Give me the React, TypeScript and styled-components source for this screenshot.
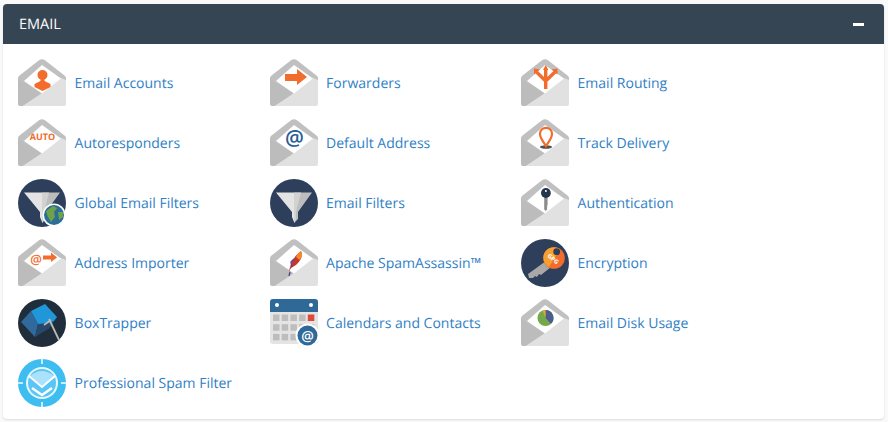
import React from "react";
import styled, { createGlobalStyle } from "styled-components";

const Global = createGlobalStyle`
  html, body { margin: 0; padding: 0; background: #f9f9f9; }
  body { font-family: "Open Sans", "Liberation Sans", sans-serif; text-rendering: geometricPrecision; }
`;

const Page = styled.div`
  width: 888px;
  height: 422px;
  box-sizing: border-box;
  padding: 4px 4px 3px 3px;
  overflow: hidden;
`;

const Panel = styled.section`
  height: 100%;
  background: #fff;
  border-radius: 4px;
  box-shadow: 0 1px 2px rgba(0, 0, 0, 0.12);
  overflow: hidden;
`;

const Header = styled.header`
  height: 40px;
  box-sizing: border-box;
  display: flex;
  align-items: center;
  justify-content: space-between;
  padding: 0 20px 0 16px;
  background: #364554;
  color: #fff;
  font-size: 14.5px;
`;

const Minus = styled.span`
  width: 11px;
  height: 3px;
  background: #fff;
`;

const Grid = styled.div`
  display: grid;
  grid-template-columns: 251.5px 251.5px 251.5px;
  grid-auto-rows: 60px;
  padding: 15px 15px 0;
`;

const Item = styled.a`
  display: flex;
  align-items: center;
  gap: 8.6px;
  color: #2f80c6;
  font-size: 14px;
  text-decoration: none;
  height: 48px;
`;

const Icon = styled.svg`
  width: 48px;
  height: 48px;
  flex: none;
`;

const IconText = styled.text`
  font-family: "Open Sans", "Liberation Sans", sans-serif;
  text-anchor: middle;
`;

const Env: React.FC<{ children?: React.ReactNode }> = ({ children }) => (
  <Icon viewBox="0 0 48 48">
    <path d="M0 19 Q0 17.5 1.5 16.4 L21 1.2 Q24 -0.6 27 1.2 L46.5 16.4 Q48 17.5 48 19 L48 26 L24 36 L0 26 Z" fill="#c0c0c0" />
    <path d="M0 20 L24 35 L5 47 L2 47 Q0 47 0 45 Z" fill="#bcbcbc" />
    <path d="M48 21 L48 45 Q48 47 46 47 L5 47 L24 34 L43 19 Z" fill="#e1e1e1" />
    <path d="M6 22 L24 6 L43 19.5 L24 34.5 Z" fill="#fff" />
    {children}
  </Icon>
);

const O = "#f26c2b";

const Funnel: React.FC<{ children?: React.ReactNode }> = ({ children }) => (
  <Icon viewBox="0 0 48 48">
    <circle cx="24" cy="24" r="24" fill="#2e3f5c" />
    <path d="M6 13.5 L24 13.5 L24 43 L22 38 L22 33 Z" fill="#e4e4e4" />
    <path d="M24 13.5 L42 13.5 L28 33 L28 40 L24 44 Z" fill="#bdbdbd" />
    <path d="M24 13.5 L31 13.5 L26 33 L26 41 L24 44 Z" fill="#d2d2d2" />
    {children}
  </Icon>
);

const items: [string, React.ReactNode][] = [
  ["Email Accounts", <Env key="a"><circle cx="24.5" cy="16" r="5" fill={O} /><path d="M22.5 19 L26.5 19 L26.5 22 L32.5 25 L32.5 28 L24.5 32 L16.5 28 L16.5 25 L22.5 22 Z" fill={O} /></Env>],
  ["Forwarders", <Env key="b"><path d="M15 15 L27 15 L27 10 L37 18 L27 26 L27 22 L15 22 Z" fill={O} /></Env>],
  ["Email Routing", <Env key="c"><path d="M24.7 30 L24.7 10 M24.7 22 L15.5 13 M24.7 22 L34 13" fill="none" stroke={O} strokeWidth="3.4" /><path d="M22 11 L24.7 6 L27.4 11 Z M13 15.5 L13 9.5 L19 10.5 Z M36.5 15.5 L36.5 9.5 L30.5 10.5 Z" fill={O} /></Env>],
  ["Autoresponders", <Env key="d"><IconText x="24.5" y="21" fill={O} fontSize="9" fontWeight="700">AUTO</IconText></Env>],
  ["Default Address", <Env key="e"><IconText x="24.5" y="26" fill="#275d92" fontSize="21" fontWeight="600">@</IconText></Env>],
  ["Track Delivery", <Env key="f"><ellipse cx="25" cy="28" rx="6" ry="1.8" fill="#55524d" /><path d="M25 27 C22 22 19 19.5 19 14.8 A6 6 0 0 1 31 14.8 C31 19.5 28 22 25 27 Z" fill="none" stroke={O} strokeWidth="2.2" /></Env>],
  ["Global Email Filters", <Funnel key="g"><circle cx="36" cy="36" r="11.5" fill="#fff" /><circle cx="36" cy="36" r="10" fill="#2b6f97" /><path d="M28 32 L35 27 L39 29 L36 33 L37 38 L33 43 L30 38 Z M40 33 L45 33 L45 38 L41 41 Z" fill="#6fa04a" /></Funnel>],
  ["Email Filters", <Funnel key="h" />],
  ["Authentication", <Env key="i"><path d="M23.2 18 L26.6 18 L26.6 26 L25.8 27 L26.6 28 L25.6 29 L26.4 30 L24.9 32 L23.2 30.5 Z" fill="#8c8c8c" /><circle cx="24.9" cy="14" r="4.9" fill="#22354a" /><circle cx="24.9" cy="12" r="1" fill="#fff" /></Env>],
  ["Address Importer", <Env key="j"><IconText x="18" y="25" fill={O} fontSize="13" fontWeight="600">@</IconText><path d="M25 16.5 L33 16.5 L33 13.5 L39 18.5 L33 23 L33 20.5 L25 20.5 Z" fill={O} /></Env>],
  ["Apache SpamAssassin™", <Env key="k"><path d="M19 33 C20 26 23 18 31 12 C33 17 31 22 26 26 L21 29 Z" fill="#c0392b" /><path d="M31 12 C33 15 32 18 29.5 21 L26 18 C27 15.5 29 13.5 31 12 Z" fill="#f08a2c" /><path d="M20 33 L19 37" stroke="#5b4a8a" strokeWidth="1.4" /><path d="M22 28 L21 23 L24 20" stroke="#6a3f8f" strokeWidth="1.4" fill="none" /></Env>],
  ["Encryption", <Icon key="l" viewBox="0 0 48 48"><circle cx="24" cy="24" r="24" fill="#2e3f5c" /><path d="M25 22 L7 35 L8 39 L12 39 L14 37 L16 38 L18 35 L20 36 L30 28 Z" fill="#a8a8a8" /><circle cx="33" cy="19" r="10.8" fill={O} /><path d="M24 13 A10.8 10.8 0 0 1 39 10 L28 28 A10.8 10.8 0 0 1 24 13 Z" fill="#f7a032" /><circle cx="35.7" cy="12.7" r="3.4" fill="#2e3f5c" /><IconText x="32" y="22" fill="#fff" fontSize="6" fontWeight="700" transform="rotate(40 32 20)">GPG</IconText></Icon>],
  ["BoxTrapper", <Icon key="m" viewBox="0 0 48 48"><circle cx="24" cy="24" r="24" fill="#202e3b" /><path d="M3 23 L13 12 L20 25 L17 38 Z" fill="#30699b" /><path d="M13 12 L27 5 L39 18 L30 30 L20 25 Z" fill="#1f97d9" /><path d="M20 25 L30 24 L36 22 L30 30 L17 38 Z" fill="#28486d" /><path d="M31 20 L41 41" stroke="#b9bab5" strokeWidth="1.8" /><path d="M26 26 L33 21" stroke="#b9bab5" strokeWidth="1.6" /></Icon>],
  ["Calendars and Contacts", <Icon key="n" viewBox="0 0 48 48"><rect x="0" y="0" width="48" height="45" rx="3" fill="#e4e4e4" /><path d="M0 13 L0 3 Q0 0 3 0 L45 0 Q48 0 48 3 L48 13 Z" fill="#2f6997" /><circle cx="7" cy="6" r="2" fill="#fff" /><circle cx="41" cy="6" r="2" fill="#fff" />{[0, 1, 2].map(r => [0, 1, 2, 3, 4].map(c => <rect key={`${r}${c}`} x={3 + c * 8.7} y={15.5 + r * 9.7} width="6.5" height="6.5" fill={r === 0 && c === 4 ? "#dc4a38" : "#bdbdbd"} />))}<circle cx="37.5" cy="36.5" r="12" fill="#fff" /><circle cx="37.5" cy="36.5" r="10" fill="#2f6997" /><IconText x="37.5" y="41.5" fill="#fff" fontSize="14" fontWeight="600">@</IconText></Icon>],
  ["Email Disk Usage", <Env key="o"><circle cx="24.5" cy="19" r="8" fill="#75a84b" /><path d="M24.5 19 L24.5 11 A8 8 0 0 1 30 24.8 Z" fill="#4d5c90" /><path d="M24.5 19 L21.5 11.6 A8 8 0 0 1 24.5 11 Z" fill="#e9a32e" /></Env>],
  ["Professional Spam Filter", <Icon key="p" viewBox="0 0 48 48"><circle cx="24" cy="24" r="24" fill="#3dbdf0" /><circle cx="24" cy="24" r="16" fill="#e6f7fe" /><circle cx="24" cy="24" r="14" fill="#59c6f5" /><path d="M12 17 L24 27 L36 17 Q24 7 12 17 Z" fill="#a9e2fa" /><path d="M11 17 L24 28 L37 17" fill="none" stroke="#fff" strokeWidth="2" /><path d="M14 29 L24 36 L34 29" fill="none" stroke="#fff" strokeWidth="2.4" /><rect x="23" y="0" width="2" height="5" fill="#c9eefb" /><rect x="23" y="43" width="2" height="5" fill="#c9eefb" /><rect x="0" y="23" width="5" height="2" fill="#c9eefb" /><rect x="43" y="23" width="5" height="2" fill="#c9eefb" /></Icon>],
];

export default function App() {
  return (
    <Page>
      <Global />
      <Panel>
        <Header>
          <span>EMAIL</span>
          <Minus />
        </Header>
        <Grid>
          {items.map(([label, icon]) => (
            <Item key={label} href="#">
              {icon}
              <span>{label}</span>
            </Item>
          ))}
        </Grid>
      </Panel>
    </Page>
  );
}
